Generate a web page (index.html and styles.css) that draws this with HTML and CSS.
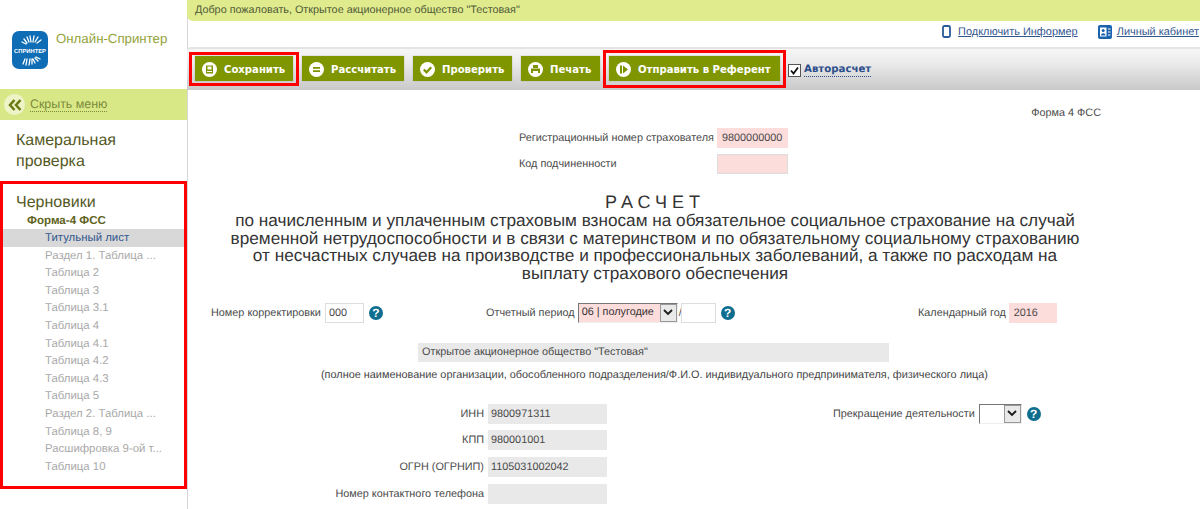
FILE: index.html
```html
<!DOCTYPE html>
<html lang="ru">
<head>
<meta charset="utf-8">
<title>Онлайн-Спринтер</title>
<link rel="stylesheet" href="styles.css">
</head>
<body>
<div class="app">
  <aside class="sidebar">
    <div class="brand">
      <svg class="logo" viewBox="0 0 36 38" width="36" height="38">
        <rect width="36" height="38" rx="7" fill="#0f6db5"/>
        <g stroke="#fff" stroke-width="1.3" stroke-linecap="round">
          <path d="M12 8l3 4M15 6l2 5M18 5l1 6M22 5l-1 6M26 6l-3 5M29 9l-4 3M10 11l4 2"/>
          <path d="M11 33l2-5M14 34l1-6M17 34l1-6M20 33l0-5M23 32l-2-4M26 30l-3-3M28 28l-4-2"/>
        </g>
        <text x="18" y="21.5" class="logo-text" text-anchor="middle">СПРИНТЕР</text>
      </svg>
      <span class="brand-name">Онлайн-Спринтер</span>
    </div>
    <div class="collapse">
      <span class="collapse-icon">
        <svg viewBox="0 0 14 12" width="14" height="12"><path d="M6.5 1L2 6l4.500 5M12.500 1L8 6l4.500 5" fill="none" stroke="#6b7a12" stroke-width="2.600"/></svg>
      </span>
      <span class="collapse-link">Скрыть меню</span>
    </div>
    <div class="nav-group">
      <div class="nav-title">Камеральная проверка</div>
    </div>
    <div class="drafts">
      <div class="nav-title">Черновики</div>
      <div class="nav-sub">Форма-4 ФСС</div>
      <ul class="nav-list">
        <li class="active">Титульный лист</li>
        <li>Раздел 1. Таблица ...</li>
        <li>Таблица 2</li>
        <li>Таблица 3</li>
        <li>Таблица 3.1</li>
        <li>Таблица 4</li>
        <li>Таблица 4.1</li>
        <li>Таблица 4.2</li>
        <li>Таблица 4.3</li>
        <li>Таблица 5</li>
        <li>Раздел 2. Таблица ...</li>
        <li>Таблица 8, 9</li>
        <li>Расшифровка 9-ой т...</li>
        <li>Таблица 10</li>
      </ul>
    </div>
  </aside>

  <main class="main">
    <div class="welcome">Добро пожаловать, Открытое акционерное общество "Тестовая"</div>
    <div class="toplinks">
      <a class="toplink toplink-phone">
        <svg viewBox="0 0 9 13" width="9" height="13"><rect x="1" y="1" width="7" height="11" rx="1.500" fill="#fff" stroke="#2a5a9c" stroke-width="1.800"/></svg>
        <span>Подключить Информер</span>
      </a>
      <a class="toplink">
        <svg viewBox="0 0 14 14" width="14" height="14"><rect width="14" height="14" rx="2" fill="#1a62ad"/><rect x="2" y="2.500" width="6.500" height="9" fill="#fff"/><circle cx="5.200" cy="5.500" r="1.500" fill="#1a62ad"/><path d="M3 10.500c0-3 4.500-3 4.500 0z" fill="#1a62ad"/><path d="M10 4h2.500M10 7h2.500M10 10h2.500" stroke="#fff" stroke-width="1.200"/></svg>
        <span>Личный кабинет</span>
      </a>
    </div>
    <div class="toolbar">
      <button class="btn marked-save btn-save">
        <svg class="ico" viewBox="0 0 15 15"><circle cx="7.500" cy="7.500" r="7.500" fill="#fff"/><path d="M4 3.500h7v8H4z" fill="#7f9300"/><path d="M5.500 4.500h4v3h-4z" fill="#fff"/><path d="M5 9h5v1H5z" fill="#fff"/></svg>
        Сохранить
      </button>
      <button class="btn btn-calc">
        <svg class="ico" viewBox="0 0 15 15"><circle cx="7.500" cy="7.500" r="7.500" fill="#fff"/><path d="M4 5h7v1.800H4zM4 8.300h7v1.800H4z" fill="#7f9300"/></svg>
        Рассчитать
      </button>
      <button class="btn btn-check">
        <svg class="ico" viewBox="0 0 15 15"><circle cx="7.500" cy="7.500" r="7.500" fill="#fff"/><path d="M3.800 7.500l2.700 2.800 4.700-5" fill="none" stroke="#7f9300" stroke-width="2.200"/></svg>
        Проверить
      </button>
      <button class="btn btn-print">
        <svg class="ico" viewBox="0 0 15 15"><circle cx="7.500" cy="7.500" r="7.500" fill="#fff"/><path d="M5 3h5v3H5zM3 6.500h9v4.500H3z" fill="#7f9300"/><path d="M5 9h5v2.500H5z" fill="#fff"/></svg>
        Печать
      </button>
      <button class="btn marked-send btn-send">
        <svg class="ico" viewBox="0 0 15 15"><circle cx="7.500" cy="7.500" r="7.500" fill="#fff"/><path d="M4 3.500h2v8H4z" fill="#7f9300"/><path d="M7 3.500l5 4-5 4z" fill="#7f9300"/></svg>
        Отправить в Референт
      </button>
      <label class="auto">
        <span class="checkbox"><svg viewBox="0 0 13 13" width="13" height="13"><path d="M3 6.500l2.500 3 4.500-6" fill="none" stroke="#111" stroke-width="1.800"/></svg></span>
        <span class="auto-link">Авторасчет</span>
      </label>
    </div>

    <div class="form">
      <div class="form-name">Форма 4 ФСС</div>
      <div class="reg">
        <div class="reg-row"><span>Регистрационный номер страхователя</span><span class="field pink reg-field">9800000000</span></div>
        <div class="reg-row"><span>Код подчиненности</span><span class="field pink reg-field outlined"></span></div>
      </div>
      <div class="heading">
        <div class="heading-main">РАСЧЕТ</div>
        <div class="heading-sub">по начисленным и уплаченным страховым взносам на обязательное социальное страхование на случай<br>временной нетрудоспособности и в связи с материнством и по обязательному социальному страхованию<br>от несчастных случаев на производстве и профессиональных заболеваний, а также по расходам на<br>выплату страхового обеспечения</div>
      </div>
      <div class="period">
        <div class="period-left">
          <span>Номер корректировки</span>
          <span class="field white corr">000</span>
          <span class="help">?</span>
        </div>
        <div class="period-mid">
          <span class="period-label">Отчетный период</span>
          <span class="select pink-select"><span class="select-value">06 | полугодие</span><span class="select-arrow"><svg viewBox="0 0 10 7" width="10" height="7"><path d="M1 1l4 4 4-4" fill="none" stroke="#1a1a1a" stroke-width="1.800"/></svg></span></span>
          <span class="slash">/</span>
          <span class="field white sub-period"></span>
          <span class="help">?</span>
        </div>
        <div class="period-right">
          <span>Календарный год</span>
          <span class="field pink year">2016</span>
        </div>
      </div>
      <div class="org field grey">Открытое акционерное общество "Тестовая"</div>
      <div class="org-caption">(полное наименование организации, обособленного подразделения/Ф.И.О. индивидуального предпринимателя, физического лица)</div>
      <div class="ids">
        <div class="id-list">
          <div class="id-row"><span class="id-label">ИНН</span><span class="field grey id-field">9800971311</span></div>
          <div class="id-row"><span class="id-label">КПП</span><span class="field grey id-field">980001001</span></div>
          <div class="id-row"><span class="id-label">ОГРН (ОГРНИП)</span><span class="field grey id-field">1105031002042</span></div>
          <div class="id-row"><span class="id-label">Номер контактного телефона</span><span class="field grey id-field"></span></div>
        </div>
        <div class="stop">
          <span>Прекращение деятельности</span>
          <span class="select small-select"><span class="select-value"></span><span class="select-arrow"><svg viewBox="0 0 10 7" width="10" height="7"><path d="M1 1l4 4 4-4" fill="none" stroke="#1a1a1a" stroke-width="1.800"/></svg></span></span>
          <span class="help">?</span>
        </div>
      </div>
    </div>
  </main>
</div>
</body>
</html>
```
FILE: styles.css
```css
* { box-sizing: border-box; }
html, body { margin: 0; height: 100%; overflow: hidden; background: #fff; }
body { font-family: "Liberation Sans", Arial, sans-serif; font-size: 10.850px; color: #4a4a4a; text-rendering: geometricPrecision; }

.app { display: grid; grid-template-columns: 187px 1fr; height: 509px; overflow: hidden; }

/* Sidebar */
.sidebar { display: flex; flex-direction: column; }
.brand { height: 89px; display: flex; align-items: flex-start; padding: 31px 0 0 12px; gap: 8px; }
.logo { flex: none; }
.logo-text { font: bold 5.800px "Liberation Sans", sans-serif; fill: #fff; }
.brand-name { font-size: 13.250px; color: #93a33a; line-height: 16px; }
.collapse { height: 31px; background: #d9e887; display: flex; align-items: center; padding-left: 4px; gap: 5px; }
.collapse-icon { width: 21px; height: 21px; border-radius: 50%; background: #eef3c8; display: flex; align-items: center; justify-content: center; }
.collapse-link { font-size: 12.400px; color: #7a8a3a; border-bottom: 1px dotted #7c8a3a; line-height: 14px; }
.nav-group { padding: 10px 16px 0; height: 61px; }
.nav-title { font-size: 16px; line-height: 21px; color: #55591f; }
.drafts { height: 308px; border: 3px solid #f00; padding-top: 8px; }
.drafts .nav-title { padding-left: 13px; }
.nav-sub { font-weight: bold; font-size: 11.600px; color: #5f6322; padding-left: 24px; line-height: 15px; margin-bottom: 1px; }
.nav-list { list-style: none; margin: 0; padding: 0; }
.nav-list li { height: 17.600px; line-height: 18px; padding-left: 42px; font-size: 11.400px; color: #a9a9a9; white-space: nowrap; }
.nav-list li.active { background: #d8d8d8; color: #32578f; }

/* Main */
.main { border-left: 1px solid #d6d6d6; min-width: 0; }
.welcome { height: 21px; margin-left: -1px; background: #dfeb8c; border-bottom-left-radius: 6px; padding-left: 8px; line-height: 21px; font-size: 10.800px; color: #4f5a3a; }
.toplinks { height: 26px; display: flex; justify-content: flex-end; align-items: center; gap: 20px; padding: 0 1px 5px 0; }
.toplink { display: flex; align-items: center; gap: 5px; color: #33568f; font-size: 10.950px; }
.toplink-phone { gap: 7px; }
.toplink span { text-decoration: underline; }
.toolbar { height: 43px; background: linear-gradient(#f6f6f6, #ededed 30%, #c9c9c9); border-top: 2px solid #e4e4e4; border-top-left-radius: 4px; display: flex; align-items: flex-start; gap: 9px; padding: 7px 0 0 8px; margin-left: -1px; }
.btn { position: relative; height: 25px; border: 0; background: #7f9600; color: #fff; font: bold 10.100px "DejaVu Sans", sans-serif; display: flex; align-items: center; gap: 7px; padding: 1px 0 0 7px; box-shadow: 0 0 1px #999; white-space: nowrap; }
.ico { width: 15px; height: 15px; flex: none; }
.marked-save::after, .marked-send::after { content: ""; position: absolute; border: 3px solid #f00; }
.marked-save::after { inset: -4px -6px -5px -6px; }
.marked-send::after { inset: -6px -6px -7px -6px; }
.btn-save { width: 98px; }
.btn-calc { width: 102px; }
.btn-check { width: 99px; }
.btn-print { width: 79px; }
.btn-send { width: 171px; margin-right: -1px; }
.auto { display: flex; align-items: center; gap: 3px; height: 28px; }
.checkbox { width: 13px; height: 13px; background: #fff; border: 1px solid #555; display: block; line-height: 0; }
.checkbox svg { margin: -1px; }
.auto-link { font: bold 10.200px "DejaVu Sans", sans-serif; color: #2c4d8b; border-bottom: 1px dotted #2c4d8b; line-height: 13px; }

/* Form */
.form { padding-top: 16px; }
.field { display: block; height: 20px; line-height: 20px; padding-left: 5px; color: #4a4a4a; }
.pink { background: #fddcdc; }
.grey { background: #e9e9e9; }
.white { background: #fff; border: 1px solid #ddd; line-height: 18px; padding-left: 3px; }
.outlined { border: 1px solid #ddd; }
.form-name { text-align: right; padding-right: 99px; line-height: 14px; }
.reg { margin-left: 331px; margin-top: 8px; }
.reg-row { display: flex; justify-content: space-between; width: 269px; height: 20px; align-items: center; margin-bottom: 6px; }
.reg-field { width: 71px; }
.heading { width: 890px; margin: 19px 0 0 22px; text-align: center; color: #333; }
.heading-main { font-size: 18px; letter-spacing: 5px; line-height: 19px; }
.heading-sub { font-size: 17.200px; line-height: 17.700px; }
.period { display: flex; align-items: center; height: 20px; margin-top: 20px; }
.period-left { display: flex; align-items: center; gap: 4px; margin-left: 23px; width: 275px; }
.corr { width: 39px; }
.help { width: 14px; height: 14px; border-radius: 50%; background: #0f6d8f; color: #fff; font: bold 12px/14px "Liberation Sans", sans-serif; text-align: center; margin-left: 1px; display: block; }
.period-mid { display: flex; align-items: center; gap: 1px; width: 432px; }
.period-mid .help { margin-left: 4px; }
.period-label { margin-right: 2px; }
.period-right { display: flex; align-items: center; gap: 3px; }
.sub-period { width: 35px; }
.slash { width: 1px; }
.select { display: flex; height: 20px; border: 1px solid #777; border-right-color: #eee; border-bottom-color: #eee; }
.pink-select { width: 100px; background: #fddcdc; }
.select-value { flex: 1; line-height: 16px; padding-left: 3px; color: #333; }
.select-arrow { width: 17px; background: #e9e9e9; border: 1px solid #999; display: flex; align-items: center; justify-content: center; }
.small-select { width: 43px; background: #fff; }
.year { width: 48px; }
.org { width: 471px; margin: 20px 0 0 230px; height: 19px; line-height: 19px; padding-left: 4px; }
.org-caption { margin: 7px 0 0 133px; font-size: 10.880px; line-height: 13px; color: #444; white-space: nowrap; }
.ids { display: flex; margin-top: 22px; }
.id-list { width: 419px; }
.id-row { display: flex; justify-content: flex-end; align-items: center; gap: 4px; height: 20px; margin-bottom: 6.600px; }
.id-field { width: 119px; padding-left: 3px; }
.stop { display: flex; align-items: center; gap: 4px; height: 20px; margin-left: 226px; }
.stop .help { margin-left: 1px; }
```
